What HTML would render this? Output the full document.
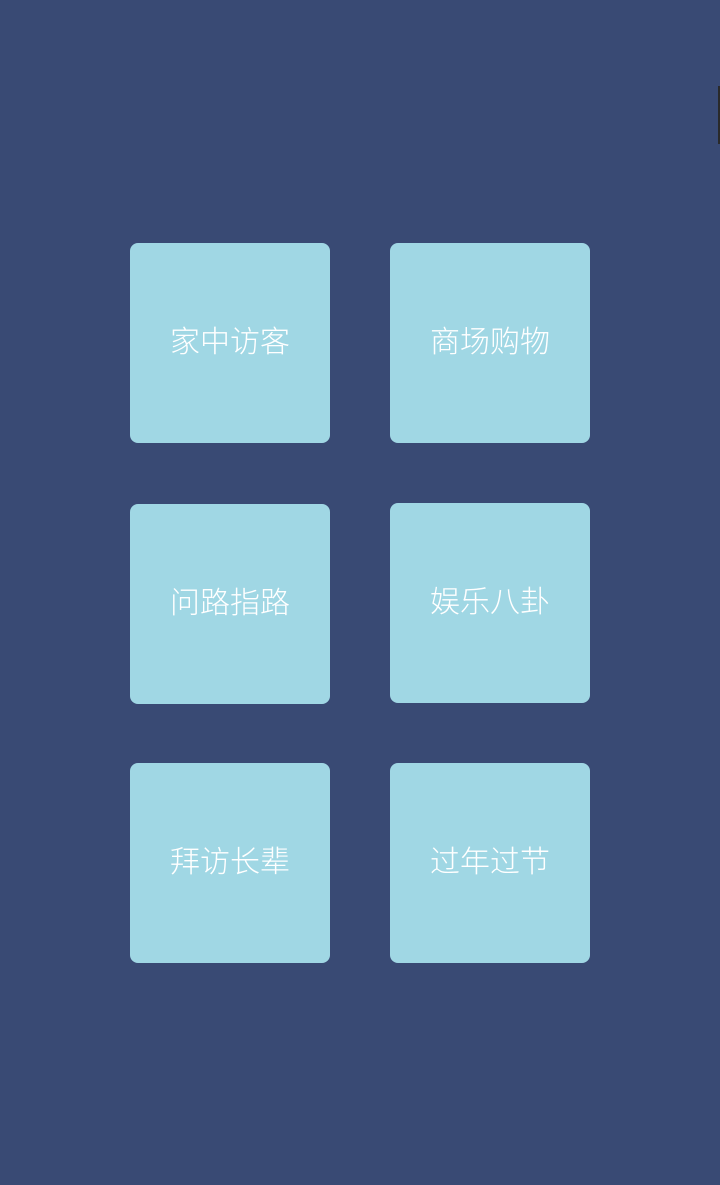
<!DOCTYPE html>
<html><head><meta charset="utf-8"><style>
html,body{margin:0;padding:0;}
body{width:720px;height:1185px;background:#394a74;position:relative;overflow:hidden;font-family:"Liberation Sans","Noto Sans CJK SC",sans-serif;}
.t{position:absolute;width:200px;height:200px;background:#a0d7e4;border-radius:8px;color:#fff;font-size:30px;font-weight:300;display:flex;align-items:center;justify-content:center;line-height:1;}
.bar{position:absolute;left:718px;top:86px;width:2px;height:58px;background:#2a2a2a;}
</style></head><body>
<div class="bar"></div>
<div class="t" style="left:130px;top:243px">家中访客</div>
<div class="t" style="left:390px;top:243px">商场购物</div>
<div class="t" style="left:130px;top:504px">问路指路</div>
<div class="t" style="left:390px;top:503px">娱乐八卦</div>
<div class="t" style="left:130px;top:763px">拜访长辈</div>
<div class="t" style="left:390px;top:763px">过年过节</div>
</body></html>
